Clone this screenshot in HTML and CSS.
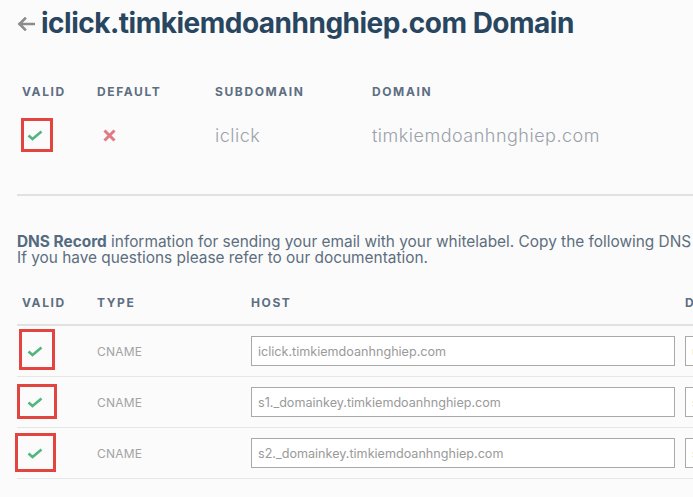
FILE: index.html
```html
<!DOCTYPE html>
<html lang="en">
<head>
<meta charset="utf-8">
<title>iclick.timkiemdoanhnghiep.com Domain</title>
<link rel="stylesheet" href="styles.css">
</head>
<body>
<div class="page">
  <h1 class="title">
    <svg class="back" width="18" height="14" viewBox="0 0 18 14" aria-hidden="true"><path d="M17 7H2.5M8 1.5L2.5 7L8 12.5" fill="none" stroke="#8c8c8c" stroke-width="2.6" stroke-linecap="square"/></svg>
    <span>iclick.timkiemdoanhnghiep.com Domain</span>
  </h1>

  <div class="domain-table">
    <div class="head">VALID</div>
    <div class="head">DEFAULT</div>
    <div class="head">SUBDOMAIN</div>
    <div class="head">DOMAIN</div>

    <div class="cell valid">
      <span class="mark mark-top"></span>
      <svg class="check" width="16" height="11" viewBox="0 0 16 11"><path d="M1.5 5.5L5.5 9L14.5 1.5" fill="none" stroke="#52b77d" stroke-width="2.6"/></svg>
    </div>
    <div class="cell">
      <svg class="cross" width="13" height="13" viewBox="0 0 13 13"><path d="M1.5 1.5L11.5 11.5M11.5 1.5L1.5 11.5" fill="none" stroke="#e07b83" stroke-width="3"/></svg>
    </div>
    <div class="cell light">iclick</div>
    <div class="cell light">timkiemdoanhnghiep.com</div>
  </div>

  <hr class="divider">

  <p class="intro"><span class="line"><strong>DNS Record</strong> information for sending your email with your whitelabel. Copy the following DNS records and add them to your DNS provider.</span><span class="line">If you have questions please refer to our documentation.</span></p>

  <div class="dns">
    <div class="dns-row dns-head">
      <div class="head">VALID</div>
      <div class="head">TYPE</div>
      <div class="head">HOST</div>
      <div class="head">DATA</div>
    </div>
    <div class="dns-row">
      <div class="valid">
        <span class="mark mark-1"></span>
        <svg class="check" width="16" height="11" viewBox="0 0 16 11"><path d="M1.5 5.5L5.5 9L14.5 1.5" fill="none" stroke="#52b77d" stroke-width="2.6"/></svg>
      </div>
      <div class="type">CNAME</div>
      <div><input class="field" type="text" value="iclick.timkiemdoanhnghiep.com" readonly></div>
      <div><input class="field" type="text" value="u1234567.wl.sendgrid.net" readonly></div>
    </div>
    <div class="dns-row">
      <div class="valid">
        <span class="mark mark-2"></span>
        <svg class="check" width="16" height="11" viewBox="0 0 16 11"><path d="M1.5 5.5L5.5 9L14.5 1.5" fill="none" stroke="#52b77d" stroke-width="2.6"/></svg>
      </div>
      <div class="type">CNAME</div>
      <div><input class="field" type="text" value="s1._domainkey.timkiemdoanhnghiep.com" readonly></div>
      <div><input class="field" type="text" value="s1.domainkey.u1234567.wl.sendgrid.net" readonly></div>
    </div>
    <div class="dns-row">
      <div class="valid">
        <span class="mark mark-3"></span>
        <svg class="check" width="16" height="11" viewBox="0 0 16 11"><path d="M1.5 5.5L5.5 9L14.5 1.5" fill="none" stroke="#52b77d" stroke-width="2.6"/></svg>
      </div>
      <div class="type">CNAME</div>
      <div><input class="field" type="text" value="s2._domainkey.timkiemdoanhnghiep.com" readonly></div>
      <div><input class="field" type="text" value="s2.domainkey.u1234567.wl.sendgrid.net" readonly></div>
    </div>
  </div>
</div>
</body>
</html>
```

FILE: styles.css
```css
html, body {
  margin: 0;
  padding: 0;
  background: #fbfbfb;
  overflow: hidden;
}

body {
  font-family: "Inter", "Open Sans", "Liberation Sans", sans-serif;
  color: #546b81;
}

.page {
  width: 1000px;
  padding: 6px 0 0 17px;
}

.title {
  display: flex;
  align-items: center;
  gap: 6px;
  margin: 0;
  font-size: 28px;
  line-height: 34px;
  font-weight: 700;
  color: #294661;
  letter-spacing: -0.5px;
}

.back {
  flex: none;
  margin-top: 1px;
}

.head {
  font-size: 12px;
  line-height: 16px;
  font-weight: 700;
  letter-spacing: 1.6px;
  color: #5d6f81;
}

.domain-table {
  display: grid;
  grid-template-columns: 75px 118px 157px 1fr;
  margin: 44px 0 0 5px;
  row-gap: 18px;
}

.cell {
  display: flex;
  align-items: center;
  height: 34px;
}

.light {
  font-size: 18px;
  font-weight: 300;
  letter-spacing: 0.5px;
  color: #9aa1a9;
}

.valid {
  position: relative;
  display: flex;
  align-items: center;
}

.check {
  display: block;
  margin-left: 5px;
}

.cross {
  display: block;
  margin-left: 6px;
}

.mark {
  position: absolute;
  border: 3px solid #e2443f;
  box-sizing: border-box;
}

.mark-top { left: -1px; top: 0; width: 32px; height: 34px; }
.mark-1 { left: -3px; top: 3px; width: 36px; height: 41px; }
.mark-2 { left: -5px; top: 7px; width: 40px; height: 35px; }
.mark-3 { left: -7px; top: 5px; width: 41px; height: 39px; }

.divider {
  margin: 42px 0 0;
  border: 0;
  height: 2px;
  background: #e1e1e1;
}

.intro {
  margin: 38px 0 0;
  font-size: 15.4px;
  line-height: 16px;
  color: #5d6e7e;
  white-space: nowrap;
}

.intro .line {
  display: block;
  height: 16px;
}

.intro strong {
  font-weight: 700;
  color: #546b81;
}

.dns {
  margin-top: 29px;
}

.dns-row {
  display: grid;
  grid-template-columns: 75px 154px 434px 300px;
  padding-left: 5px;
  height: 50px;
  align-items: center;
  border-bottom: 1px solid #e6e6e6;
}

.dns-head {
  height: auto;
  padding-bottom: 13px;
  border-bottom: 2px solid #e1e1e1;
  align-items: start;
}

.dns-row .valid {
  height: 100%;
}

.type {
  font-size: 12px;
  color: #a3a3a3;
  letter-spacing: 0.2px;
}

.field {
  display: block;
  box-sizing: border-box;
  width: 424px;
  height: 30px;
  margin: 0;
  padding: 0 6px;
  border: 1px solid #a9a9a9;
  border-radius: 0;
  background: #fff;
  font-family: "Inter", "Open Sans", "Liberation Sans", sans-serif;
  font-size: 12.6px;
  color: #9a9a9a;
  outline: none;
}
```
